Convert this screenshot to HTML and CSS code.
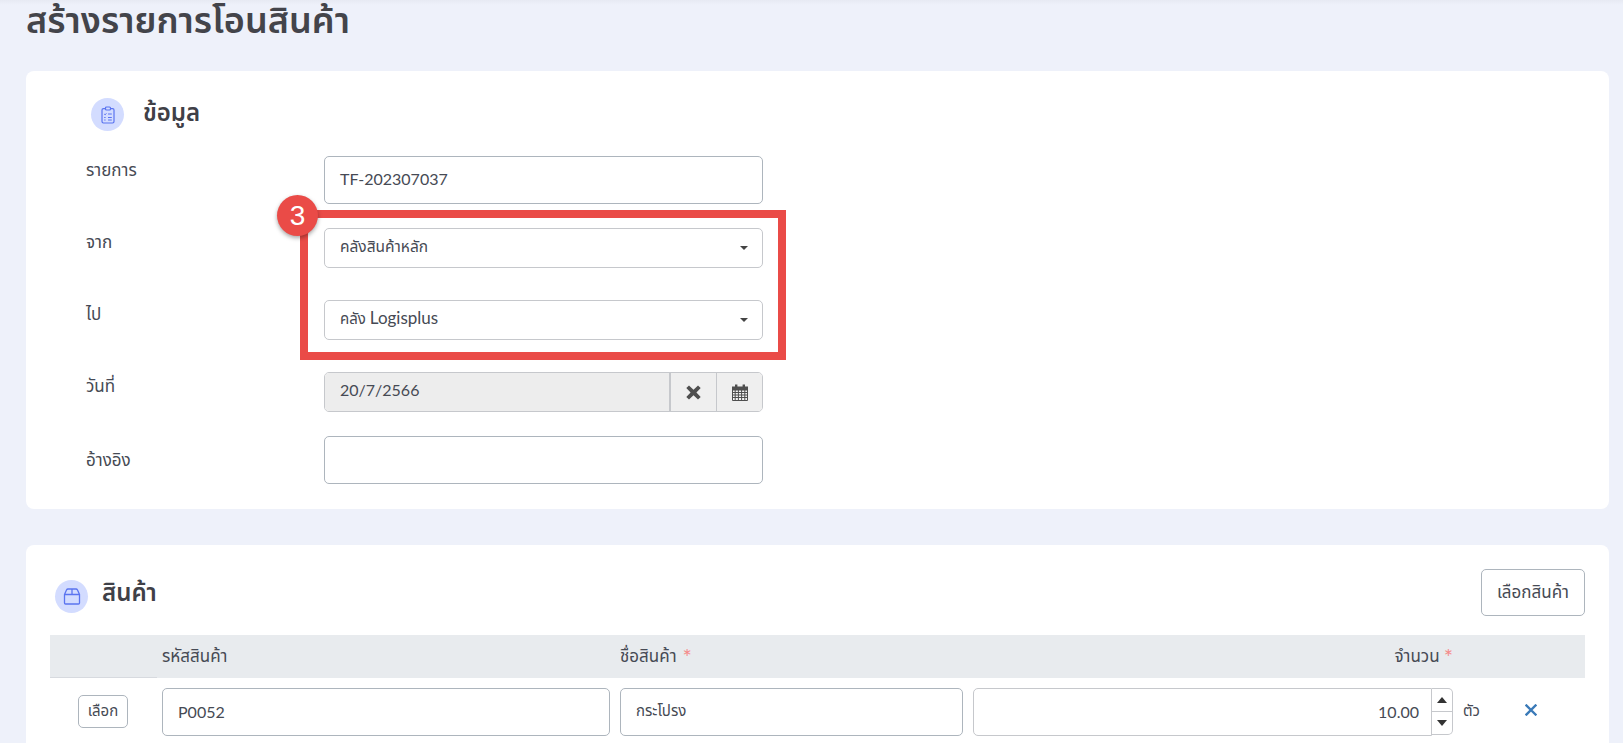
FILE: index.html
```html
<!DOCTYPE html>
<html lang="th">
<head>
<meta charset="utf-8">
<title>สร้างรายการโอนสินค้า</title>
<link rel="stylesheet" href="styles.css">
</head>
<body>
<div class="page">
  <h1 class="page-title">สร้างรายการโอนสินค้า</h1>

  <section class="card card-info">
    <div class="section-head info-head">
      <span class="icon-circle">
        <svg width="14" height="18" viewBox="0 0 14 18" fill="none" stroke="#5b74f0" stroke-width="1.200"><rect x="1" y="2.600" width="12" height="14.400" rx="1.400"/><rect x="4.500" y="1" width="5" height="3" rx="1" fill="#d3dcff"/><path d="M3.200 8l.9.900 1.300-1.600M7 8h3.800M3.200 11.500h1.400M7 11.500h3.800M3.200 14h1.400M7 14h3.800" stroke-width="1"/></svg>
      </span>
      <h2 class="section-title">ข้อมูล</h2>
    </div>
    <div class="form">
      <div class="form-row">
        <label class="form-label">รายการ</label>
        <div class="field input value">TF-202307037</div>
      </div>
      <div class="form-row">
        <label class="form-label">จาก</label>
        <div class="field select"><span class="select-text">คลังสินค้าหลัก</span><i class="caret"></i></div>
      </div>
      <div class="form-row">
        <label class="form-label">ไป</label>
        <div class="field select"><span class="select-text"><span class="thai-small">คลัง</span> <span class="latin">Logisplus</span></span><i class="caret"></i></div>
      </div>
      <div class="form-row row-short">
        <label class="form-label">วันที่</label>
        <div class="field date">
          <span class="date-value">20/7/2566</span>
          <span class="date-btn btn-clear">
            <svg width="15" height="15" viewBox="0 0 15 15"><path d="M3 .4L7.500 4.800 12 .4l2.700 2.700-4.300 4.400 4.300 4.400-2.700 2.700-4.500-4.400L3 14.600.3 11.900l4.300-4.400L.3 3.100z" fill="#4f4f4f"/></svg>
          </span>
          <span class="date-btn btn-cal">
            <svg width="16" height="17" viewBox="0 0 16 17"><path d="M0 2.500h16V6H0z" fill="#4f4f4f"/><path d="M3 .6h2.400v3H3zM10.600.6H13v3h-2.400z" fill="#4f4f4f"/><path d="M.5 6v10.500h15V6z" fill="#f4f4f4" stroke="#4f4f4f"/><path d="M0 8.500h16M0 11h16M0 13.500h16M3.200 6v10M6.400 6v10M9.600 6v10M12.800 6v10" stroke="#4f4f4f" stroke-width="1"/></svg>
          </span>
        </div>
      </div>
      <div class="form-row last">
        <label class="form-label label-low">อ้างอิง</label>
        <div class="field input"></div>
      </div>
    </div>
    <div class="highlight"></div>
    <div class="badge">3</div>
  </section>

  <section class="card card-items">
    <div class="items-head">
      <div class="section-head">
        <span class="icon-circle">
          <svg width="18" height="17" viewBox="0 0 18 17" fill="none" stroke="#5b74f0" stroke-width="1.300"><path d="M1.500 6.500L3.500 2Q4 1 5 1h8q1 0 1.500 1l2 4.500V15q0 1-1 1h-13q-1 0-1-1zM1.500 6.500h15M9 1v5.500"/></svg>
        </span>
        <h2 class="section-title">สินค้า</h2>
      </div>
      <button class="btn btn-pick">เลือกสินค้า</button>
    </div>
    <div class="table">
      <div class="th th-first"></div>
      <div class="th">รหัสสินค้า</div>
      <div class="th">ชื่อสินค้า <span class="req">*</span></div>
      <div class="th th-qty">จำนวน <span class="req">*</span></div>
      <div class="th th-end"></div>

      <div class="td td-choose"><button class="btn btn-choose">เลือก</button></div>
      <div class="td"><div class="field input cell-input value">P0052</div></div>
      <div class="td"><div class="field input cell-input name-input">กระโปรง</div></div>
      <div class="td td-qty">
        <div class="field input cell-input qty-input value">10.00</div>
        <div class="spin">
          <span class="spin-btn"><i class="tri tri-up"></i></span>
          <span class="spin-btn"><i class="tri tri-down"></i></span>
        </div>
      </div>
      <div class="td td-end">
        <span class="unit">ตัว</span>
        <svg class="remove" width="12" height="12" viewBox="0 0 12 12"><path d="M1.500 1.500l9 9M10.500 1.500l-9 9" stroke="#3a7ab8" stroke-width="2.400" stroke-linecap="square"/></svg>
      </div>
    </div>
  </section>
</div>
</body>
</html>
```

FILE: styles.css
```css
* { box-sizing: border-box; }
html, body { margin: 0; height: 100%; overflow: hidden; }
body {
  background: linear-gradient(#e7eaf3, #eef1fa 5px);
  color: #464a54;
  font-family: Lato, "Noto Sans Thai", "Noto Sans", "Liberation Sans", sans-serif;
  font-size: 15px;
}
.page { padding: 0 14px 0 26px; }
.page-title {
  margin: 0;
  height: 71px;
  font-size: 36px;
  line-height: 38px;
  font-weight: 600;
  color: #43444a;
}
.card { background: #fff; border-radius: 8px; position: relative; }
.card-info { height: 438px; padding: 27px 0 0 60px; margin-bottom: 36px; }
.section-head { display: flex; align-items: flex-start; gap: 14px; height: 33px; }
.info-head { padding-left: 5px; gap: 19px; }
.icon-circle {
  width: 33px; height: 33px; border-radius: 50%;
  background: #d3dcff;
  display: flex; align-items: center; justify-content: center;
}
.section-title { margin: -3px 0 0; font-size: 24px; line-height: 33px; font-weight: 600; color: #3f4047; }
.items-head .section-title { margin-top: -5px; }
.form { margin-top: 25px; }
.form-row { display: flex; align-items: flex-start; height: 48px; margin-bottom: 24px; }
.form-row.row-short { height: 40px; }
.form-row.last { margin-bottom: 0; }
.form-label { width: 238px; padding-top: 2px; line-height: 24px; font-size: 17px; }
.form-label.label-low { padding-top: 12px; }
.value { font-size: 16px; }
.thai-small { font-size: 15px; }
.latin { font-size: 17px; }
.field { width: 439px; background: #fff; display: flex; align-items: center; }
.input { height: 48px; border: 1px solid #adb5bd; border-radius: 5px; padding: 0 15px 2px; }
.input.value { padding-bottom: 4px; }
.select { height: 40px; border: 1px solid #c6c8cc; border-radius: 5px; padding: 0 14px 0 15px; justify-content: space-between; }
.select-text { font-size: 15.5px; padding-bottom: 2px; }
.caret { width: 0; height: 0; border: 4px solid transparent; border-top-color: #444; border-bottom: 0; }
.date { height: 40px; border: 1px solid #c6c8cc; border-radius: 5px; overflow: hidden; }
.date-value { flex: 1; height: 100%; background: #ededed; padding: 0 15px 6px; font-size: 16px; display: flex; align-items: center; border-right: 2px solid #c6c8cc; }
.date-btn { height: 100%; display: flex; align-items: center; justify-content: center; background: #efefef; }
.btn-clear { width: 46px; border-right: 1px solid #c6c8cc; }
.btn-cal { width: 45px; }
.highlight {
  position: absolute; left: 274px; top: 139px;
  width: 486px; height: 150px;
  border: 8px solid #ea4b47;
  pointer-events: none;
}
.badge {
  position: absolute; left: 251px; top: 124px;
  width: 41px; height: 41px; border-radius: 50%;
  background: #ea4b47; color: #fff;
  font-family: "Liberation Sans", sans-serif;
  font-size: 28px; line-height: 41px; text-align: center;
  box-shadow: 0 2px 4px rgba(0,0,0,.35);
}
.card-items { padding: 24px; height: 300px; }
.items-head { display: flex; justify-content: space-between; align-items: flex-start; padding-left: 5px; height: 66px; }
.items-head .section-head { padding-top: 11px; height: 44px; }
.btn {
  background: #fff; border: 1px solid #adb5bd; border-radius: 5px;
  color: #464a54; font: inherit; padding: 0;
}
.btn-pick { width: 104px; height: 47px; font-size: 17px; }
.btn-choose { width: 50px; height: 33px; font-size: 15px; }
.table { display: grid; grid-template-columns: 107px 458px 353px 485px 132px; grid-template-rows: 43px 66px; }
.th { background: #e8ebee; padding: 0 5px; display: flex; align-items: center; gap: 6px; font-size: 17px; }
.th-first { border-bottom: 1px solid #d7dadf; }
.th-qty { justify-content: flex-end; padding-right: 0; gap: 4px; }
.req { color: #f58a8a; font-size: 22px; line-height: 22px; }
.td { padding: 10px 0 0 5px; }
.td-choose { padding: 17px 0 0 28px; }
.td .cell-input { width: 448px; padding: 0 15px 2px; }
.td .name-input { width: 343px; }
.td-qty { display: flex; align-items: flex-start; padding-right: 0; }
.td .qty-input { width: 459px; justify-content: flex-end; border-color: #c6c8cc; border-radius: 5px 0 0 5px; padding-right: 12px; flex: none; }
.spin { width: 21px; height: 47px; border: 1px solid #c6c8cc; border-left: 0; border-radius: 0 5px 5px 0; display: flex; flex-direction: column; flex: none; }
.spin-btn { flex: 1; display: flex; align-items: center; justify-content: center; }
.spin-btn + .spin-btn { border-top: 1px solid #c6c8cc; }
.tri { width: 0; height: 0; border-left: 5px solid transparent; border-right: 5px solid transparent; }
.tri-up { border-bottom: 6px solid #333; }
.tri-down { border-top: 6px solid #333; }
.td-end { display: flex; align-items: flex-start; padding: 20px 0 0 10px; }
.unit { line-height: 24px; }
.remove { margin: 6px 0 0 45px; }
```
